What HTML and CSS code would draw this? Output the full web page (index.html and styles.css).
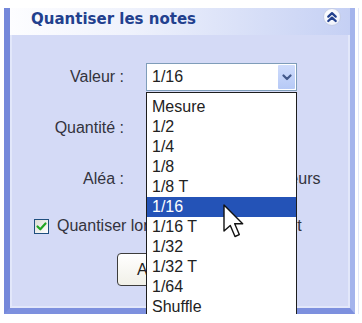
FILE: index.html
```html
<!DOCTYPE html>
<html lang="fr">
<head>
<meta charset="utf-8">
<title>Quantiser les notes</title>
<link rel="stylesheet" href="styles.css">
</head>
<body>
<div class="pane">
  <div class="header">
    <span class="title">Quantiser les notes</span>
    <span class="collapse">
      <svg width="18" height="18" viewBox="0 0 18 18"><path d="M5.3 8.6 L9 5.2 L12.7 8.6 M5.3 13 L9 9.6 L12.7 13" fill="none" stroke="#22408e" stroke-width="2.3" stroke-linecap="round" stroke-linejoin="round"/></svg>
    </span>
  </div>
  <div class="body">
    <div class="form">
      <span class="lbl">Valeur :</span>
      <div class="select">
        <span class="value">1/16</span>
        <span class="arrow">
          <svg width="10" height="7" viewBox="0 0 10 7"><path d="M1.5 1.5 L5 5 L8.5 1.5" fill="none" stroke="#42588a" stroke-width="2.2" stroke-linecap="round" stroke-linejoin="round"/></svg>
        </span>
        <ul class="list">
          <li>Mesure</li>
          <li>1/2</li>
          <li>1/4</li>
          <li>1/8</li>
          <li>1/8 T</li>
          <li class="sel">1/16</li>
          <li>1/16 T</li>
          <li>1/32</li>
          <li>1/32 T</li>
          <li>1/64</li>
          <li>Shuffle</li>
        </ul>
      </div>
      <span class="lbl">Quantité :</span>
      <div class="ctrl"><span class="field"></span></div>
      <span class="lbl">Aléa :</span>
      <div class="ctrl"><span class="field small"></span><span class="unit">% des valeurs</span></div>
    </div>
    <div class="check-row">
      <span class="box">
        <svg width="13" height="13" viewBox="0 0 13 13"><path d="M2.5 6.5 L5.3 9.3 L10.5 3.5" fill="none" stroke="#23a523" stroke-width="2.2" stroke-linecap="round" stroke-linejoin="round"/></svg>
      </span>
      <span class="check-label">Quantiser longueur simultanément</span>
    </div>
    <button class="apply" type="button">Appliquer</button>
  </div>
</div>
<svg class="cursor" width="22" height="35" viewBox="0 0 22 35"><path d="M1 1 L1 27 L7.3 21.4 L12 32.5 L16.3 30.6 L11.7 19.7 L19.7 19.7 Z" fill="#fff" stroke="#111" stroke-width="1.4" stroke-linejoin="round"/></svg>
</body>
</html>
```

FILE: styles.css
```css
body {
  margin: 0;
  background: #fff;
  font-family: "Liberation Sans", Arial, sans-serif;
  font-size: 16px;
  color: #2e2e38;
}

.pane {
  margin: 8px 0 0 4px;
  width: 351px;
  box-sizing: border-box;
  border-left: 6px solid #7588da;
  border-right: 5px solid #a4b4ec;
  border-bottom: 6px solid #7d90de;
  box-shadow: 3px 0 0 #fff, 4px 0 0 #e3e8f8;
}

.header {
  height: 27px;
  box-sizing: border-box;
  display: flex;
  justify-content: space-between;
  align-items: flex-start;
  padding: 0 9px 0 21px;
  background: linear-gradient(to right, #fdfdff 0%, #eff2fc 35%, #c5d0f4 100%);
}

.title {
  font-family: "DejaVu Sans", Verdana, sans-serif;
  font-weight: bold;
  font-size: 15px;
  line-height: 18px;
  padding-top: 2px;
  color: #22408e;
}

.collapse {
  width: 18px;
  height: 18px;
  margin-top: 0;
  box-sizing: border-box;
  border-radius: 50%;
  border: 1px solid #c5cde6;
  background: radial-gradient(circle at 40% 35%, #ffffff 0%, #f3f5fc 60%, #dde3f5 100%);
  display: flex;
  align-items: center;
  justify-content: center;
}

.collapse svg {
  display: block;
  flex-shrink: 0;
}

.body {
  height: 273px;
  box-sizing: border-box;
  background: #d4daf6;
  border: 2px solid #e2e7fa;
  border-top: 0;
  padding-top: 28px;
}

.form {
  display: grid;
  grid-template-columns: 112px 151px;
  grid-auto-rows: 28px;
  column-gap: 22px;
  row-gap: 23px;
  align-items: center;
}

.lbl {
  text-align: right;
  color: #33333d;
}

.select {
  position: relative;
  display: flex;
  height: 28px;
  box-sizing: border-box;
  border: 1px solid #7f9db9;
  background: #fff;
}

.value {
  flex: 1;
  padding-left: 5px;
  line-height: 26px;
  color: #222;
}

.arrow {
  width: 17px;
  margin: 1px;
  border-radius: 1px;
  background: linear-gradient(#cfdcfc, #b6c9f6);
  display: flex;
  align-items: center;
  justify-content: center;
}

.arrow svg {
  display: block;
}

.list {
  position: absolute;
  top: 28px;
  left: -1px;
  width: 151px;
  box-sizing: border-box;
  margin: 0;
  padding: 4px 0 2px;
  list-style: none;
  border: 1px solid #1d1d1d;
  background: #fff;
  z-index: 2;
}

.list li {
  line-height: 20px;
  padding-left: 5px;
  color: #222;
}

.list li.sel {
  background: #2453b7;
  color: #fff;
}

.ctrl {
  display: flex;
  align-items: center;
  white-space: nowrap;
}

.field {
  flex-shrink: 0;
  width: 80px;
  height: 24px;
  box-sizing: border-box;
  border: 1px solid #7f9db9;
  background: #fff;
}

.field.small {
  width: 66px;
  margin-right: 8px;
}

.unit {
  flex-shrink: 0;
  color: #33333d;
}

.check-row {
  display: flex;
  align-items: center;
  gap: 8px;
  height: 20px;
  margin-top: 23px;
  padding-left: 22px;
  white-space: nowrap;
}

.box {
  flex-shrink: 0;
  width: 15px;
  height: 15px;
  box-sizing: border-box;
  border: 1px solid #1f4f7e;
  background: linear-gradient(135deg, #dcdcd4, #ffffff);
  display: flex;
  align-items: center;
  justify-content: center;
}

.box svg {
  display: block;
}

.check-label {
  color: #33333d;
}

.apply {
  display: block;
  width: 108px;
  height: 33px;
  margin: 17px 0 0 105px;
  padding: 0 0 0 19px;
  text-align: left;
  box-sizing: border-box;
  border: 1px solid #3c3c3c;
  border-radius: 4px;
  background: linear-gradient(#ffffff, #f1f0e8);
  font-family: "Liberation Sans", Arial, sans-serif;
  font-size: 16px;
  color: #222;
}

.cursor {
  position: absolute;
  left: 223px;
  top: 204px;
  z-index: 3;
}
```
